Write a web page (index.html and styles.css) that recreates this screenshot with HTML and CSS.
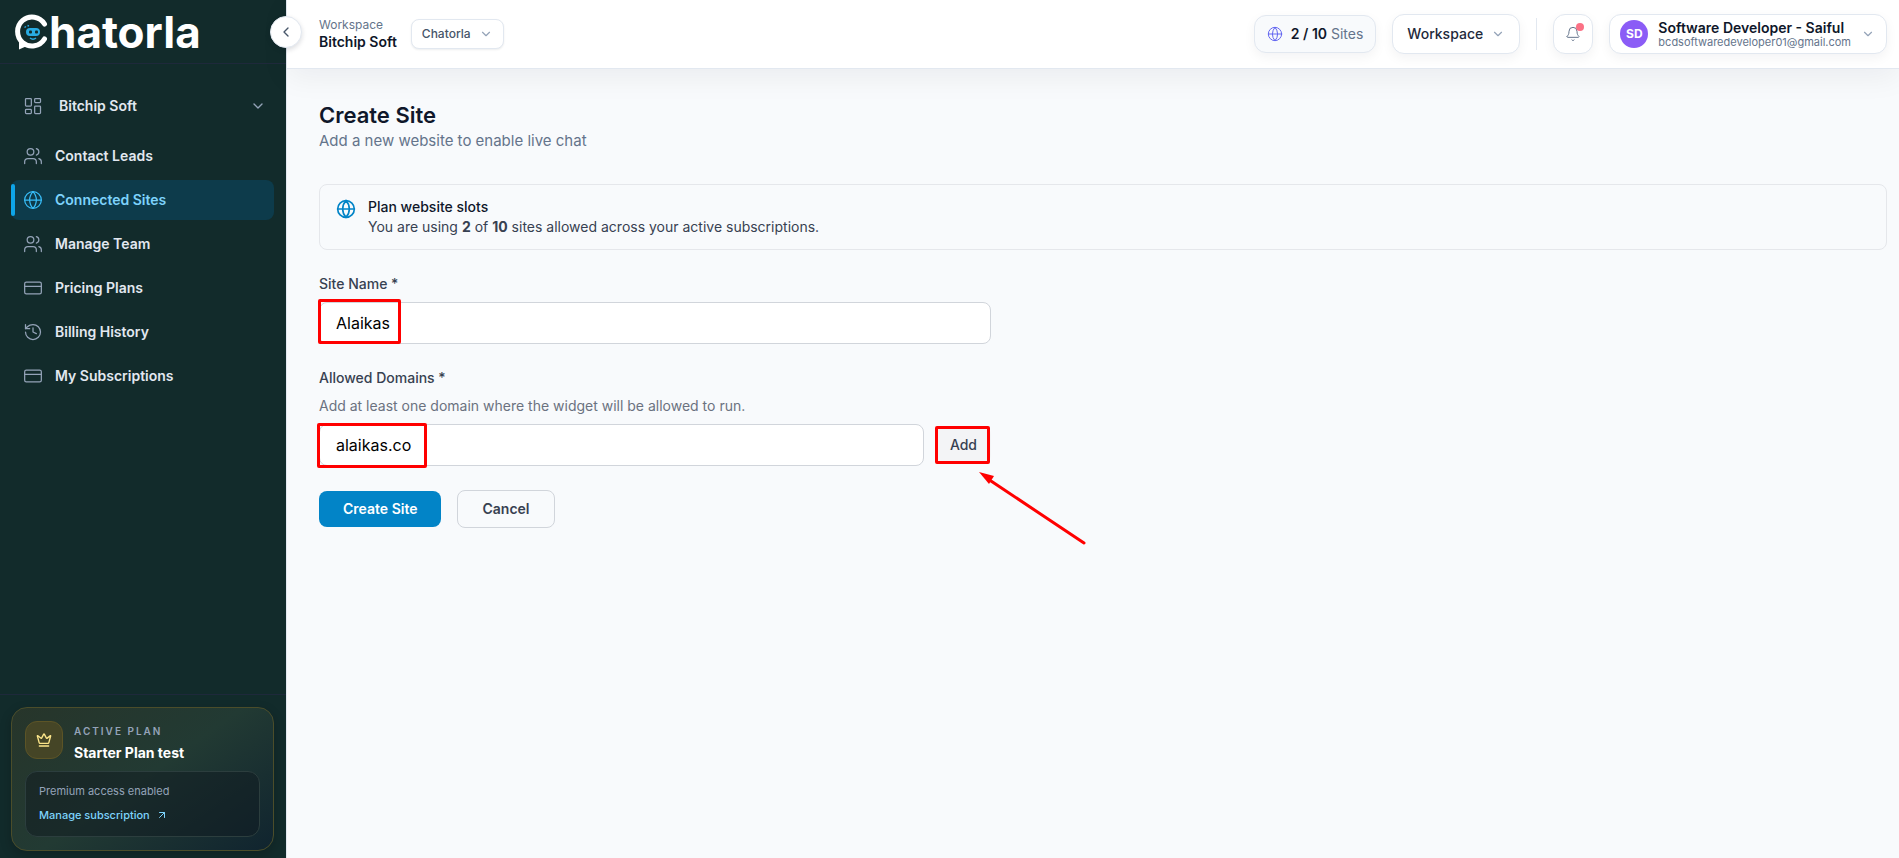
FILE: index.html
```html
<!DOCTYPE html>
<html lang="en">
<head>
    <meta charset="UTF-8">
    <meta name="viewport" content="width=device-width, initial-scale=1.0">
    <title>Create Site - Chatorla</title>
    <link rel="stylesheet" href="styles.css">
</head>
<body>
    <!-- Shared icons -->
    <svg class="sprite" aria-hidden="true">
        <symbol id="i-dashboard" viewBox="0 0 24 24"><rect x="3" y="3" width="7" height="9" rx="1"/><rect x="14" y="3" width="7" height="5" rx="1"/><rect x="14" y="12" width="7" height="9" rx="1"/><rect x="3" y="16" width="7" height="5" rx="1"/></symbol>
        <symbol id="i-users" viewBox="0 0 24 24"><path d="M16 21v-2a4 4 0 0 0-4-4H6a4 4 0 0 0-4 4v2"/><circle cx="9" cy="7" r="4"/><path d="M22 21v-2a4 4 0 0 0-3-3.87M16 3.13a4 4 0 0 1 0 7.75"/></symbol>
        <symbol id="i-globe" viewBox="0 0 24 24"><circle cx="12" cy="12" r="10"/><path d="M12 2a14.5 14.5 0 0 0 0 20 14.5 14.5 0 0 0 0-20M2 12h20"/></symbol>
        <symbol id="i-card" viewBox="0 0 24 24"><rect x="2" y="5" width="20" height="14" rx="2"/><path d="M2 10h20"/></symbol>
        <symbol id="i-history" viewBox="0 0 24 24"><path d="M3 12a9 9 0 1 0 9-9 9.75 9.75 0 0 0-6.74 2.74L3 8"/><path d="M3 3v5h5M12 7v5l4 2"/></symbol>
        <symbol id="i-down" viewBox="0 0 24 24"><path d="m6 9 6 6 6-6"/></symbol>
        <symbol id="i-left" viewBox="0 0 24 24"><path d="m15 18-6-6 6-6"/></symbol>
        <symbol id="i-bell" viewBox="0 0 24 24"><path d="M10.27 21a2 2 0 0 0 3.46 0"/><path d="M3.26 15.33A1 1 0 0 0 4 17h16a1 1 0 0 0 .74-1.67C19.41 13.96 18 12.5 18 8A6 6 0 0 0 6 8c0 4.5-1.41 5.96-2.74 7.33"/></symbol>
        <symbol id="i-crown" viewBox="0 0 24 24"><path d="M11.56 3.27a.5.5 0 0 1 .88 0l2.95 5.6a1 1 0 0 0 1.52.3L21.18 5.5a.5.5 0 0 1 .8.52l-2.83 10.25a1 1 0 0 1-.96.73H5.81a1 1 0 0 1-.96-.73L2.02 6.02a.5.5 0 0 1 .8-.52l4.27 3.67a1 1 0 0 0 1.52-.3zM5 21h14"/></symbol>
        <symbol id="i-arrow" viewBox="0 0 24 24"><path d="M7 7h10v10M7 17 17 7"/></symbol>
    </svg>

    <div class="app">
        <aside class="sidebar">
            <div class="brand">
                <a href="#" class="logo" aria-label="Chatorla">
                    <svg class="logo-mark" viewBox="0 0 34 36" aria-hidden="true">
                        <path d="M29.500 10A14.500 14.500 0 1 0 29.500 25" fill="none" stroke="#fff" stroke-width="5" stroke-linecap="round"/>
                        <path d="M4 25v10.500l9-4z" fill="#fff"/>
                        <rect x="11" y="14" width="14" height="8" rx="4" fill="#29abe2"/>
                        <rect x="14" y="16.500" width="3" height="3" rx="1" fill="#122b2b"/>
                        <rect x="20" y="16.500" width="3" height="3" rx="1" fill="#122b2b"/>
                        <path d="M15 24q3 2.500 6 0M9.500 13.500l1.500-1M12.500 11.500l1.500 .5" fill="none" stroke="#29abe2" stroke-width="1.500"/>
                    </svg>
                    <span>hatorla</span>
                </a>
                <button class="collapse" aria-label="Collapse sidebar"><svg class="icon"><use href="#i-left"/></svg></button>
            </div>

            <nav class="nav">
                <button class="nav-item nav-group">
                    <svg class="icon icon-nav"><use href="#i-dashboard"/></svg>
                    <span>Bitchip Soft</span>
                    <svg class="icon icon-sm"><use href="#i-down"/></svg>
                </button>
                <a href="#" class="nav-item"><svg class="icon icon-nav"><use href="#i-users"/></svg>Contact Leads</a>
                <a href="#" class="nav-item active"><svg class="icon icon-nav"><use href="#i-globe"/></svg>Connected Sites</a>
                <a href="#" class="nav-item"><svg class="icon icon-nav"><use href="#i-users"/></svg>Manage Team</a>
                <a href="#" class="nav-item"><svg class="icon icon-nav"><use href="#i-card"/></svg>Pricing Plans</a>
                <a href="#" class="nav-item"><svg class="icon icon-nav"><use href="#i-history"/></svg>Billing History</a>
                <a href="#" class="nav-item"><svg class="icon icon-nav"><use href="#i-card"/></svg>My Subscriptions</a>
            </nav>

            <div class="sidebar-footer">
                <div class="plan">
                    <div class="plan-head">
                        <div class="plan-icon"><svg class="icon"><use href="#i-crown"/></svg></div>
                        <div>
                            <p class="plan-label">ACTIVE PLAN</p>
                            <p class="plan-name">Starter Plan test</p>
                        </div>
                    </div>
                    <div class="plan-body">
                        <p>Premium access enabled</p>
                        <a href="#">Manage subscription <svg class="icon"><use href="#i-arrow"/></svg></a>
                    </div>
                </div>
            </div>
        </aside>

        <div class="page">
            <header class="topbar">
                <div class="workspace">
                    <p class="workspace-label">Workspace</p>
                    <p class="workspace-name">Bitchip Soft</p>
                </div>
                <div class="dropdown dropdown-sm">
                    <select aria-label="Site"><option>Chatorla</option></select>
                    <svg class="icon"><use href="#i-down"/></svg>
                </div>

                <div class="topbar-right">
                    <div class="usage">
                        <svg class="icon"><use href="#i-globe"/></svg>
                        <span><strong>2 / 10</strong> Sites</span>
                    </div>
                    <div class="dropdown">
                        <select aria-label="Workspace"><option>Workspace</option></select>
                        <svg class="icon"><use href="#i-down"/></svg>
                    </div>
                    <div class="divider"></div>
                    <button class="bell" aria-label="Notifications"><svg class="icon"><use href="#i-bell"/></svg></button>
                    <button class="user">
                        <span class="avatar">SD</span>
                        <span class="user-text">
                            <span class="user-name">Software Developer - Saiful</span>
                            <span class="user-email">bcdsoftwaredeveloper01@gmail.com</span>
                        </span>
                        <svg class="icon"><use href="#i-down"/></svg>
                    </button>
                </div>
            </header>

            <main class="content">
                <h1>Create Site</h1>
                <p class="subtitle">Add a new website to enable live chat</p>

                <section class="slots">
                    <svg class="icon"><use href="#i-globe"/></svg>
                    <div>
                        <h2>Plan website slots</h2>
                        <p>You are using <strong>2</strong> of <strong>10</strong> sites allowed across your active subscriptions.</p>
                    </div>
                </section>

                <form class="form">
                    <label for="siteName">Site Name *</label>
                    <div class="field mark mark-name">
                        <input type="text" id="siteName" value="Alaikas">
                    </div>

                    <label for="domain">Allowed Domains *</label>
                    <p class="hint" id="domainHint">Add at least one domain where the widget will be allowed to run.</p>
                    <div class="domain-row">
                        <div class="field mark mark-domain">
                            <input type="text" id="domain" value="alaikas.co" aria-describedby="domainHint">
                        </div>
                        <div class="add mark mark-add">
                            <button type="button" class="btn-add">Add</button>
                            <svg class="pointer" viewBox="0 0 108 74" aria-hidden="true">
                                <path d="M12 9 105 71" stroke="#f00" stroke-width="3" stroke-linecap="round"/>
                                <path d="M0 0 15 4 10 12z" fill="#f00"/>
                            </svg>
                        </div>
                    </div>

                    <div class="actions">
                        <button type="submit" class="btn btn-primary">Create Site</button>
                        <button type="button" class="btn btn-outline">Cancel</button>
                    </div>
                </form>
            </main>
        </div>
    </div>
</body>
</html>
```
FILE: styles.css
```css
:root {
    --sidebar: #122b2b;
    --accent: #0284c7;
    --ink: #0f172a;
    --text: #374151;
    --muted: #64748b;
    --faint: #94a3b8;
    --line: #e2e8f0;
    --bg: #f8fafc;
    --mark: #ff0000;
}

* {
    box-sizing: border-box;
}

body {
    margin: 0;
    font-family: Inter, 'Liberation Sans', sans-serif;
    font-size: 14px;
    line-height: 20px;
    color: var(--ink);
    background: var(--bg);
}

h1, h2, p {
    margin: 0;
}

a {
    color: inherit;
    text-decoration: none;
}

button, input, select {
    font: inherit;
    color: inherit;
}

button {
    border: none;
    background: none;
    padding: 0;
    cursor: pointer;
}

.sprite {
    display: none;
}

.icon {
    width: 16px;
    height: 16px;
    flex-shrink: 0;
    fill: none;
    stroke: currentColor;
    stroke-width: 2;
    stroke-linecap: round;
    stroke-linejoin: round;
}

.app {
    display: flex;
    min-height: 100vh;
}

/* Sidebar */
.sidebar {
    width: 286px;
    flex-shrink: 0;
    display: flex;
    flex-direction: column;
    background: var(--sidebar);
    color: var(--line);
}

.brand {
    position: relative;
    display: flex;
    height: 64px;
    padding: 13px 15px;
    border-bottom: 1px solid #1e293b;
}

.logo {
    display: flex;
    align-items: center;
    height: 38px;
    color: #fff;
    font-size: 44px;
    font-weight: 700;
}

.logo-mark {
    width: 34px;
    height: 36px;
}

.collapse {
    position: absolute;
    top: 16px;
    right: -16px;
    z-index: 2;
    width: 32px;
    height: 32px;
    display: grid;
    place-items: center;
    border: 1px solid var(--line);
    border-radius: 50%;
    background: #fff;
    color: #475569;
    box-shadow: 0 2px 5px rgba(15, 23, 42, 0.15);
}

.nav {
    display: flex;
    flex-direction: column;
    gap: 4px;
    padding: 20px 12px 20px 11px;
}

.nav-item {
    position: relative;
    display: flex;
    align-items: center;
    gap: 12px;
    height: 40px;
    padding: 0 12px;
    border-radius: 8px;
    font-weight: 600;
}

.nav-item .icon {
    color: var(--faint);
}

.icon-nav {
    width: 20px;
    height: 20px;
    stroke-width: 1.5;
}

.nav-group {
    height: 44px;
    gap: 16px;
    margin-bottom: 4px;
    padding-right: 8px;
    text-align: left;
}

.nav-group span {
    flex: 1;
}

.nav-item.active {
    background: #0d3b4b;
    color: #7dd3fc;
}

/* marker on the left edge of the current page */
.nav-item.active::before {
    content: '';
    position: absolute;
    top: 4px;
    bottom: 4px;
    left: 0;
    width: 4px;
    border-radius: 4px;
    background: #0ea5e9;
}

.nav-item.active .icon {
    color: #38bdf8;
}

.sidebar-footer {
    margin-top: auto;
    padding: 12px 12px 7px 11px;
    border-top: 1px solid #1e293b;
}

.plan {
    padding: 13px;
    border: 1px solid #4b4d2a;
    border-radius: 16px;
    background: linear-gradient(145deg, #27352a 0%, #223a33 50%, #10242f 100%);
    box-shadow: 0 4px 12px rgba(0, 0, 0, 0.2);
}

.plan-head {
    display: flex;
    gap: 11px;
    margin-bottom: 6px;
}

.plan-icon {
    width: 38px;
    height: 38px;
    display: grid;
    place-items: center;
    border: 1px solid #5c5426;
    border-radius: 12px;
    background: #454526;
    color: #fde68a;
}

.plan-label {
    font-size: 10px;
    font-weight: 600;
    letter-spacing: 2px;
    color: var(--faint);
}

.plan-name {
    font-weight: 700;
    line-height: 24px;
    color: #fff;
}

.plan-body {
    display: flex;
    flex-direction: column;
    gap: 8px;
    padding: 11px 13px;
    border: 1px solid #2c3e3e;
    border-radius: 12px;
    background: rgba(15, 26, 32, 0.5);
    font-size: 11px;
    line-height: 16px;
    color: var(--faint);
}

.plan-body a {
    display: flex;
    align-items: center;
    gap: 6px;
    padding-bottom: 2px;
    font-weight: 500;
    color: #7dd3fc;
}

.plan-body .icon {
    width: 12px;
    height: 12px;
}

/* Top bar */
.page {
    flex: 1;
    min-width: 0;
    border-left: 1px solid var(--line);
}

.topbar {
    display: flex;
    align-items: center;
    gap: 14px;
    height: 69px;
    padding: 0 12px 0 32px;
    background: #fff;
    border-bottom: 1px solid var(--line);
    box-shadow: 0 8px 30px rgba(15, 23, 42, 0.06);
}

.workspace-label {
    font-size: 12px;
    line-height: 16px;
    color: var(--muted);
}

.workspace-name {
    font-weight: 600;
    line-height: 18px;
}

.dropdown {
    position: relative;
    display: flex;
    align-items: center;
    color: #1e293b;
}

.dropdown select {
    appearance: none;
    height: 40px;
    padding: 0 36px 0 14px;
    border: 1px solid var(--line);
    border-radius: 12px;
    background: #fff;
    font-weight: 500;
    box-shadow: 0 4px 12px rgba(15, 23, 42, 0.05);
}

/* chevron sits over the native select */
.dropdown .icon {
    position: absolute;
    right: 15px;
    width: 14px;
    height: 14px;
    color: var(--faint);
    pointer-events: none;
}

.dropdown-sm select {
    height: 30px;
    padding: 0 32px 0 10px;
    border-radius: 8px;
    font-size: 12px;
    color: #475569;
    box-shadow: 0 1px 2px rgba(15, 23, 42, 0.08);
}

.dropdown-sm .icon {
    right: 11px;
}

.topbar-right {
    display: flex;
    align-items: center;
    gap: 16px;
    margin-left: auto;
}

.usage {
    display: flex;
    align-items: center;
    gap: 8px;
    height: 38px;
    padding: 0 12px;
    border: 1px solid var(--line);
    border-radius: 12px;
    background: var(--bg);
    color: var(--muted);
    box-shadow: 0 4px 12px rgba(15, 23, 42, 0.05);
}

.usage .icon {
    color: #6366f1;
    stroke-width: 1.5;
}

.usage strong {
    font-weight: 600;
    color: var(--ink);
}

.divider {
    width: 1px;
    height: 32px;
    background: var(--line);
}

.bell {
    position: relative;
    width: 40px;
    height: 40px;
    display: grid;
    place-items: center;
    border: 1px solid var(--line);
    border-radius: 12px;
    background: #fff;
    color: var(--muted);
    box-shadow: 0 4px 12px rgba(15, 23, 42, 0.05);
}

.bell .icon {
    stroke-width: 1.5;
}

.bell::after {
    content: '';
    position: absolute;
    top: 8px;
    right: 8px;
    width: 8px;
    height: 8px;
    border-radius: 50%;
    background: #fb7185;
}

.user {
    display: flex;
    align-items: center;
    gap: 10px;
    height: 40px;
    padding: 0 11px 0 10px;
    border: 1px solid var(--line);
    border-radius: 12px;
    background: #fff;
    text-align: left;
    box-shadow: 0 4px 12px rgba(15, 23, 42, 0.05);
}

.user .icon {
    width: 14px;
    height: 14px;
    color: var(--faint);
}

.avatar {
    width: 28px;
    height: 28px;
    display: grid;
    place-items: center;
    border-radius: 50%;
    background: #8b5cf6;
    color: #fff;
    font-size: 12px;
    font-weight: 700;
}

.user-text {
    display: flex;
    flex-direction: column;
}

.user-name {
    font-weight: 600;
    line-height: 16px;
}

.user-email {
    font-size: 11px;
    line-height: 12px;
    color: var(--muted);
}

/* Content */
.content {
    padding: 32px 12px 32px 32px;
}

h1 {
    font-size: 22px;
    font-weight: 600;
    line-height: 28px;
}

.subtitle {
    font-size: 15px;
    line-height: 24px;
    color: var(--muted);
}

.slots {
    display: flex;
    gap: 12px;
    margin: 31px 0 24px;
    padding: 12px 16px;
    border: 1px solid #e5e7eb;
    border-radius: 8px;
}

.slots .icon {
    width: 20px;
    height: 20px;
    margin-top: 2px;
    stroke-width: 2;
    color: var(--accent);
}

.slots h2 {
    font-size: 14px;
    font-weight: 500;
}

.slots p {
    color: var(--text);
}

.form {
    max-width: 672px;
    display: flex;
    flex-direction: column;
}

.form label {
    font-weight: 500;
    color: var(--text);
}

.field {
    margin: 8px 0 24px;
}

.field input {
    display: block;
    width: 100%;
    height: 42px;
    padding: 0 16px;
    border: 1px solid #d1d5db;
    border-radius: 8px;
    background: #fff;
    font-size: 16px;
    color: #000;
}

.hint {
    margin-top: 8px;
    color: #6b7280;
}

.domain-row {
    display: flex;
    align-items: center;
    gap: 12px;
    margin-bottom: 24px;
}

.domain-row .field {
    flex: 1;
    margin: 8px 0 0;
}

.add {
    margin-top: 8px;
}

.btn-add {
    height: 36px;
    padding: 0 14px;
    border-radius: 8px;
    background: #f3f4f6;
    font-weight: 500;
    color: var(--text);
}

.actions {
    display: flex;
    align-items: center;
    gap: 16px;
}

.btn {
    height: 36px;
    padding: 0 24px;
    border-radius: 8px;
    font-weight: 600;
}

.btn-primary {
    background: var(--accent);
    color: #fff;
}

.btn-outline {
    height: 38px;
    border: 1px solid #d1d5db;
    color: var(--text);
}

/* Red callouts drawn over the fields */
.mark {
    position: relative;
}

.mark::after {
    content: '';
    position: absolute;
    box-sizing: border-box;
    border: 3px solid var(--mark);
    border-radius: 2px;
    pointer-events: none;
}

.mark-name::after {
    inset: -3px auto 0 -1px;
    width: 83px;
}

.mark-domain::after {
    inset: -1px auto -2px -2px;
    width: 110px;
}

.mark-add::after {
    inset: -1px 1px -1px -1px;
}

.pointer {
    position: absolute;
    top: 45px;
    left: 43px;
    width: 108px;
    height: 74px;
}
```
